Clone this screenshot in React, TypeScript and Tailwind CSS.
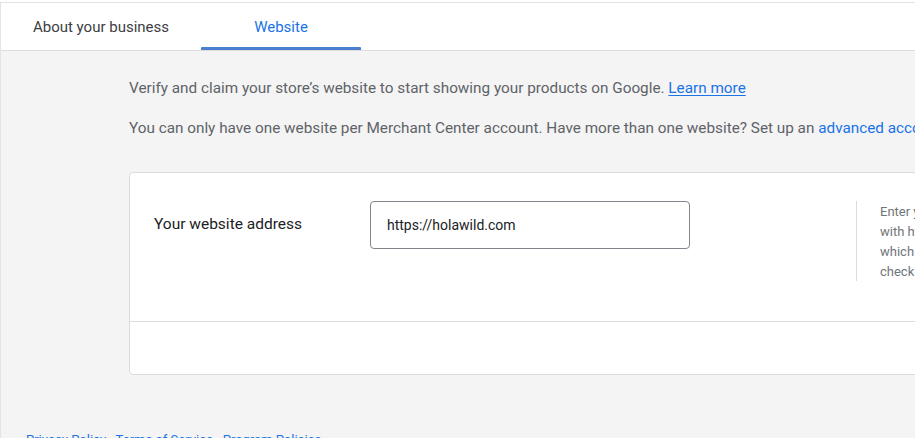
import React from "react";

export default function App() {
  return (
    <div
      className="w-[915px] h-[438px] overflow-hidden bg-white"
      style={{ fontFamily: "Roboto, 'Liberation Sans', sans-serif" }}
    >
      <div className="mt-[2px] h-[436px] border-t border-l border-[#e3e3e3] bg-[#f4f4f4] flex flex-col">
        {/* Tabs */}
        <div className="h-[48px] bg-white border-b border-[#dcdcdc] flex shrink-0">
          <div className="w-[200px] shrink-0 flex items-center justify-center text-[15px] text-[#3c4043] pt-[2px]">
            About your business
          </div>
          <div className="relative w-[160px] shrink-0 flex items-center justify-center text-[15px] text-[#1a73e8] pt-[2px]">
            Website
            <div className="absolute left-0 right-0 bottom-0 h-[3px] bg-[#4a7fd0] rounded-t-[1px]" />
          </div>
        </div>

        {/* Content */}
        <div className="pl-[128px] pt-[27px] flex flex-col">
          <p className="text-[15.3px] leading-[20px] text-[#5f6368] whitespace-nowrap">
            Verify and claim your store’s website to start showing your products on Google.{" "}
            <span className="text-[#1a73e8] underline underline-offset-2">Learn more</span>
          </p>
          <p className="mt-[20px] text-[15.3px] leading-[20px] text-[#5f6368] whitespace-nowrap">
            You can only have one website per Merchant Center account. Have more than one website? Set up an{" "}
            <span className="text-[#1a73e8]">advanced account</span>
          </p>

          <div className="mt-[34px] w-[900px] shrink-0 bg-white border border-[#dadce0] rounded-[4px] flex flex-col">
            <div className="h-[149px] shrink-0 flex pt-[28px] pl-[24px] border-b border-[#dadce0]">
              <div className="w-[216px] shrink-0 pt-[13px] text-[15.5px] leading-[20px] text-[#202124]">
                Your website address
              </div>
              <div className="w-[320px] h-[48px] shrink-0 border border-[#80868b] rounded-[4px] flex items-center pl-[16px] text-[14px] text-[#202124]">
                https://holawild.com
              </div>
              <div className="ml-[166px] shrink-0 h-[80px] border-l border-[#dadce0] pl-[23px] pt-[1px] text-[13px] leading-[20px] text-[#70757a] whitespace-nowrap">
                <div>Enter your website address</div>
                <div>with http:// or https://</div>
                <div>which will be used to</div>
                <div>check your website</div>
              </div>
            </div>
            <div className="h-[52px]" />
          </div>
        </div>

        <div className="mt-[55px] pl-[25px] text-[13px] text-[#1a73e8] whitespace-nowrap">
          Privacy Policy · Terms of Service · Program Policies
        </div>
      </div>
    </div>
  );
}
